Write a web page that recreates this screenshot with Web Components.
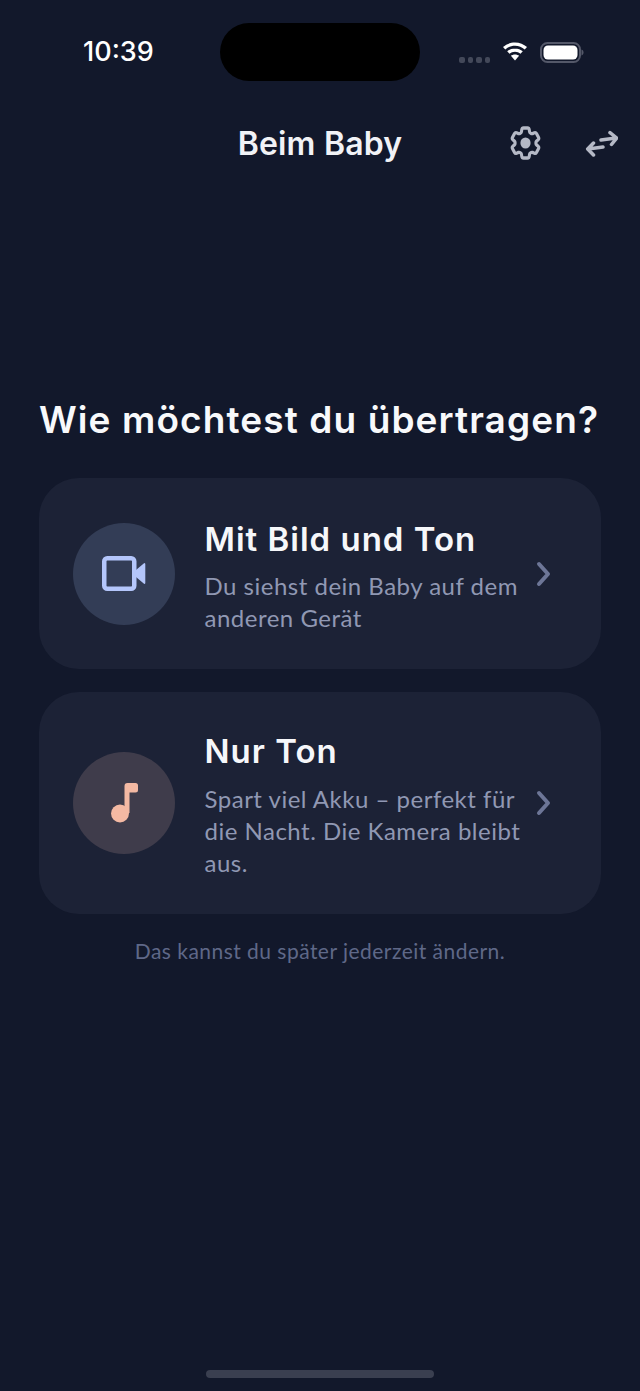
<!DOCTYPE html>
<html lang="de"><head><meta charset="utf-8"><title>Beim Baby</title>
<style>
html,body{margin:0;background:#12182b}
body{width:640px;height:1391px;overflow:hidden}
</style></head><body>
<app-screen>
  <status-bar></status-bar>
  <top-bar title="Beim Baby"></top-bar>
  <main-heading>Wie möchtest du übertragen?</main-heading>
  <option-card tone="video" heading="Mit Bild und Ton">
    <svg slot="icon" width="44" height="36" viewBox="0 0 44 36"><rect x="2.250" y="2.250" width="30" height="30.500" rx="3" fill="none" stroke="currentColor" stroke-width="4.500"/><path d="M34 14 42 7.300a.8.8 0 0 1 1.300.6V27.100a.8.8 0 0 1-1.300.6L34 21z" fill="currentColor"/></svg>
    Du siehst dein Baby auf dem anderen Gerät
  </option-card>
  <option-card tone="audio" heading="Nur Ton" style="margin-top:23px;--pt:40px;--gap:11px">
    <svg slot="icon" width="27" height="40" viewBox="0 0 27 40"><circle cx="9" cy="30.500" r="9" fill="currentColor"/><path d="M13.500 30V3a3 3 0 0 1 3-3H24.500A2.500 2.500 0 0 1 27 2.500V7A2.500 2.500 0 0 1 24.500 9.500H18.500V30z" fill="currentColor"/></svg>
    Spart viel Akku – perfekt für die Nacht. Die Kamera bleibt aus.
  </option-card>
  <foot-note>Das kannst du später jederzeit ändern.</foot-note>
  <home-indicator></home-indicator>
</app-screen>
<script>
const heading='"Inter","Noto Sans",sans-serif', body='"Lato","Noto Sans",sans-serif';
function def(name,css,html){
  customElements.define(name,class extends HTMLElement{
    connectedCallback(){
      if(this.shadowRoot)return;
      const r=this.attachShadow({mode:'open'});
      r.innerHTML=`<style>${css}</style>`+(typeof html==='function'?html(this):html);
    }
  });
}
def('app-screen',`:host{display:flex;flex-direction:column;width:640px;height:1391px;color:#fff;background:#12182b}`,`<slot></slot>`);
def('status-bar',`:host{display:grid;grid-template-columns:220px 200px 220px;height:58px;padding-top:23px}
.time{font:500 27px "Inter","Liberation Sans",sans-serif;color:#fff;padding-left:83px;line-height:58px}
.island{background:#000;border-radius:29px}
.right{display:flex;align-items:flex-start;padding-left:39px}
.dots{display:flex;gap:3px;margin-top:34px}
.dots i{width:5.500px;height:6px;border-radius:2px;background:#434859}
svg{display:block}`,
`<div class="time">10:39</div><div class="island"></div><div class="right">
<div class="dots"><i></i><i></i><i></i><i></i></div>
<svg style="margin:19px 0 0 12px" width="26" height="20" viewBox="0 0 26 21" preserveAspectRatio="none"><path d="M13 .5C8.300.5 4.200 2.300 1 5.300l2.300 2.500C5.900 5.400 9.300 3.900 13 3.900s7.100 1.500 9.700 3.900L25 5.300C21.800 2.300 17.700.5 13 .5z" fill="#fff"/><path d="M13 6.800c-3 0-5.700 1.200-7.800 3l2.300 2.500C9 11 10.900 10.200 13 10.200s4 .8 5.500 2.100l2.300-2.500c-2.100-1.800-4.800-3-7.800-3z" fill="#fff"/><path d="M13 13c-1.600 0-3 .6-4.100 1.500L13 19.500l4.100-5C16 13.600 14.600 13 13 13z" fill="#fff"/></svg>
<svg style="margin:18.500px 0 0 12px" width="44" height="21" viewBox="0 0 44 21"><rect x="1" y="1" width="39" height="19" rx="6.500" fill="none" stroke="#545869" stroke-width="2"/><rect x="3.500" y="3.500" width="34" height="14" rx="4.500" fill="#fff"/><path d="M41.500 7.500v6c1.300-.4 2-1.600 2-3s-.7-2.600-2-3z" fill="#545869"/></svg>
</div>`);
def('top-bar',`:host{display:grid;grid-template-columns:1fr auto 1fr;align-items:center;height:46px;margin-top:39px}
h1{margin:0;font:600 32px ${heading};color:#f1f2f6;white-space:nowrap;letter-spacing:.2px}
.acts{display:flex;justify-content:flex-end;align-items:center;color:#b5b9c6}
svg{display:block}`,
el=>`<span></span><h1>${el.getAttribute('title')}</h1><div class="acts">
<svg style="margin-right:40.500px" width="37" height="40" viewBox="0 0 24 24" preserveAspectRatio="none" fill="none" stroke="currentColor" stroke-width="2" stroke-linecap="round" stroke-linejoin="round"><path d="M9.594 3.94c.09-.542.56-.94 1.11-.94h2.593c.55 0 1.02.398 1.11.94l.213 1.281c.063.374.313.686.645.87.074.04.147.083.22.127.325.196.72.257 1.075.124l1.217-.456a1.125 1.125 0 0 1 1.37.49l1.296 2.247a1.125 1.125 0 0 1-.26 1.431l-1.003.827c-.293.241-.438.613-.43.992a7.723 7.723 0 0 1 0 .255c-.008.378.137.75.43.991l1.004.827c.424.35.534.955.26 1.43l-1.298 2.247a1.125 1.125 0 0 1-1.369.491l-1.217-.456c-.355-.133-.75-.072-1.076.124a6.47 6.47 0 0 1-.22.128c-.331.183-.581.495-.644.869l-.213 1.281c-.09.543-.56.94-1.11.94h-2.594c-.55 0-1.019-.398-1.11-.94l-.213-1.281c-.062-.374-.312-.686-.644-.87a6.52 6.52 0 0 1-.22-.127c-.325-.196-.72-.257-1.076-.124l-1.217.456a1.125 1.125 0 0 1-1.369-.49l-1.297-2.247a1.125 1.125 0 0 1 .26-1.431l1.004-.827c.292-.24.437-.613.43-.991a6.932 6.932 0 0 1 0-.255c.007-.38-.138-.751-.43-.992l-1.004-.827a1.125 1.125 0 0 1-.26-1.43l1.297-2.247a1.125 1.125 0 0 1 1.37-.491l1.216.456c.356.133.751.072 1.076-.124.072-.044.146-.086.22-.128.332-.183.582-.495.644-.869l.214-1.28Z"/><circle cx="12" cy="12" r="3.300" fill="currentColor" stroke="none"/></svg>
<svg style="margin-right:22px" width="34" height="28" viewBox="0 0 34 28" fill="none" stroke="currentColor" stroke-width="3.500" stroke-linecap="round" stroke-linejoin="round"><path d="M17 11 32 9M26 3.700 32.700 9l-5.200 6.500"/><path d="M4 20 19 18M9.500 14 3.700 20l5.800 6"/></svg>
</div>`);
def('main-heading',`:host{display:block;margin:230px 0 34px 39px;font:600 37px/48px ${heading};color:#f8f9fb;white-space:nowrap;letter-spacing:1.100px}`,`<slot></slot>`);
def('option-card',`:host{display:flex;align-items:center;box-sizing:border-box;margin:0 39px;width:562px;background:#1c2236;border-radius:40px;padding:var(--pt,42px) 48px 35px 34px;--tone:#b4c6fb;--bg:#333d56}
:host([tone=audio]){--tone:#f4b9a3;--bg:#3f3c4b}
.c{flex:none;width:102px;height:102px;border-radius:50%;background:var(--bg);color:var(--tone);display:flex;align-items:center;justify-content:center;margin:calc(35px - var(--pt,42px)) 29.500px 0 0}
.t{flex:1;min-width:0}
h2{margin:-1px 0 calc(var(--gap,10px) + 1px);font:600 33px/40px ${heading};color:#f6f7fa;letter-spacing:1px}
p{margin:0;font:400 24px/32px ${body};color:#9098b3;letter-spacing:.5px;width:322px}
svg{flex:none;display:block;margin:calc(35px - var(--pt,42px)) 0 0 -6px}`,
el=>`<div class="c"><slot name="icon"></slot></div><div class="t"><h2>${el.getAttribute('heading')}</h2><p><slot></slot></p></div>
<svg width="18" height="26" viewBox="0 0 18 26" fill="none" stroke="#6d7697" stroke-width="4" stroke-linecap="round" stroke-linejoin="round"><path d="M4 3l9 10-9 10"/></svg>`);
def('foot-note',`:host{display:block;margin-top:23px;text-align:center;font:400 21px/28px ${body};color:#5f6888;letter-spacing:.47px}`,`<slot></slot>`);
def('home-indicator',`:host{display:block;width:228px;height:8px;border-radius:4px;background:#3a3f50;margin:auto auto 13px}`,``);
</script>
</body></html>
